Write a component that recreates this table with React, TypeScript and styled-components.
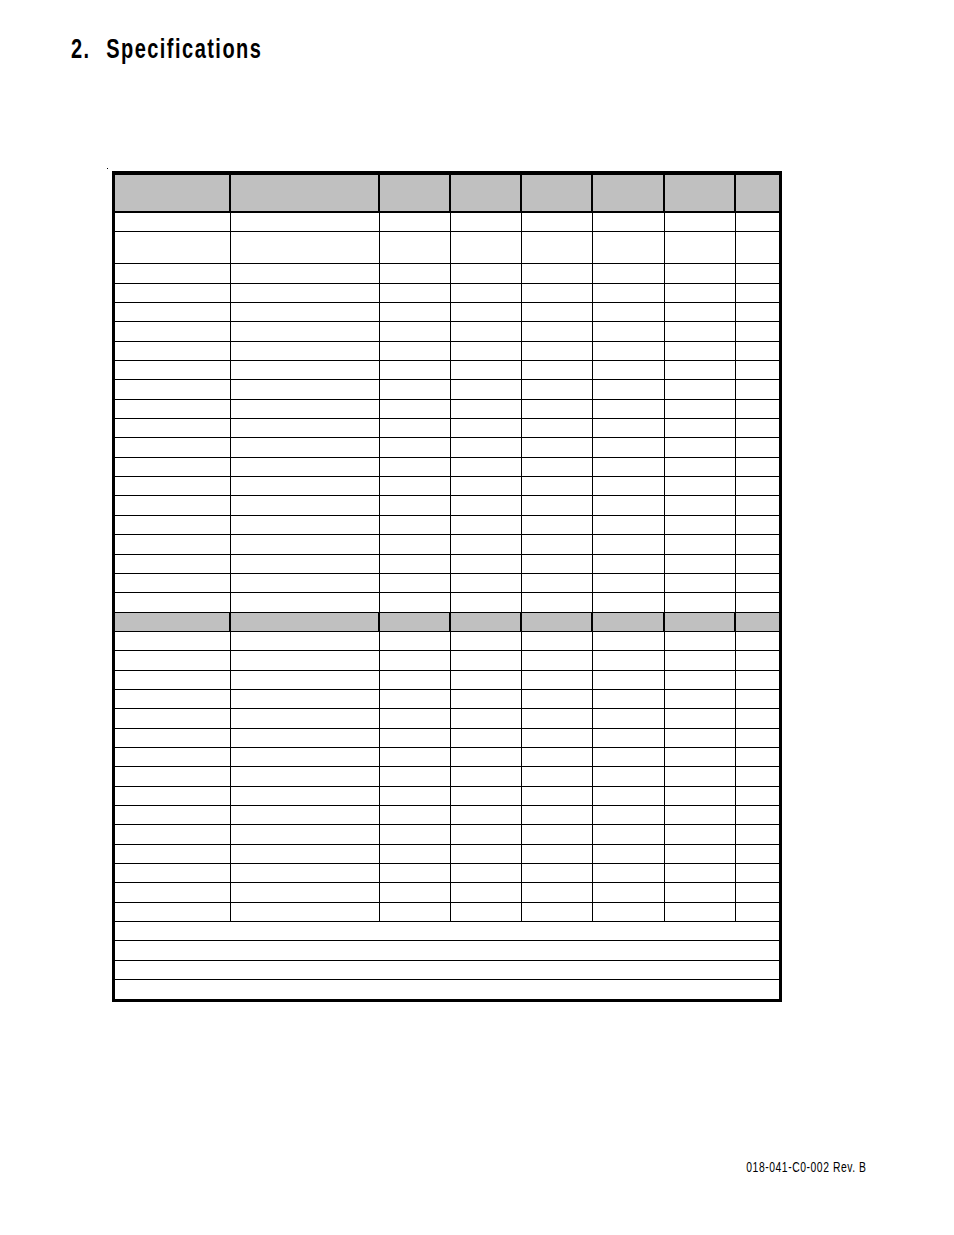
import React from "react";
import styled, { createGlobalStyle } from "styled-components";

const GlobalStyle = createGlobalStyle`
  *, *::before, *::after { box-sizing: border-box; }
  html, body { margin: 0; padding: 0; background: #ffffff; }
  body {
    width: 954px;
    min-height: 1235px;
    font-family: "Liberation Sans", Arial, sans-serif;
    color: #000;
  }
`;

const COLS = "116px 149px 71px 71px 71px 72px 71px 43px";
const NCOLS = 8;

const Page = styled.div`
  width: 954px;
  height: 1235px;
  display: flex;
  flex-direction: column;
`;

const Title = styled.h1`
  margin: 36px 0 0 71px;
  font-family: "Liberation Sans", Arial, sans-serif;
  font-size: 27px;
  line-height: 27px;
  font-weight: 700;
  white-space: nowrap;
`;

/* the printed heading uses a condensed face: narrow the regular one */
const Condensed = styled.span<{ $scale: number; $origin: string; $track: number }>`
  display: inline-block;
  letter-spacing: ${(p) => p.$track}px;
  transform: scaleX(${(p) => p.$scale});
  transform-origin: ${(p) => p.$origin} center;
`;

const TitleText = styled(Condensed)`
  word-spacing: 1px;
`;

const Speck = styled.div`
  width: 1px;
  height: 1px;
  margin: 105px 0 0 107px;
  background: #000;
`;

const SpecTable = styled.div`
  width: 670px;
  margin: 2px 0 0 112px;
  border: 3px solid #000;
  border-top-width: 4px;
  display: flex;
  flex-direction: column;
`;

const HeaderRow = styled.div`
  display: grid;
  grid-template-columns: ${COLS};
  height: 38px;
  border-bottom: 2px solid #000;
  background: #c0c0c0;
`;

const Row = styled.div<{ $tall?: boolean; $shaded?: boolean }>`
  display: grid;
  grid-template-columns: ${COLS};
  height: ${(p) => (p.$tall ? "32px" : "19.35px")};
  border-bottom: 1px solid #000;
  background: ${(p) => (p.$shaded ? "#c0c0c0" : "#ffffff")};
`;

const Cell = styled.div<{ $heavy?: boolean }>`
  border-right: ${(p) => (p.$heavy ? "2px" : "1px")} solid #000;
  &:last-child { border-right: none; }
`;

const NoteRow = styled.div<{ $last?: boolean }>`
  height: 19.35px;
  border-bottom: ${(p) => (p.$last ? "none" : "1px solid #000")};
`;

const Footer = styled.div`
  margin-top: auto;
  margin-bottom: 61px;
  padding-right: 87px;
  display: flex;
  justify-content: flex-end;
  font-family: "Liberation Sans", Arial, sans-serif;
  font-size: 14px;
  line-height: 14px;
  white-space: nowrap;
`;

type RowSpec = { tall?: boolean; shaded?: boolean };

const rows: RowSpec[] = [
  {},
  { tall: true },
  ...Array.from({ length: 18 }, () => ({})),
  { shaded: true },
  ...Array.from({ length: 15 }, () => ({})),
];

const cells = (heavy: boolean) =>
  Array.from({ length: NCOLS }, (_, i) => <Cell key={i} $heavy={heavy} />);

export default function App() {
  return (
    <>
      <GlobalStyle />
      <Page>
        <Title>
          <TitleText $scale={0.74} $origin="left" $track={2}>
            2.&nbsp; Specifications
          </TitleText>
        </Title>
        <Speck />
        <SpecTable>
          <HeaderRow>{cells(true)}</HeaderRow>
          {rows.map((r, i) => (
            <Row key={i} $tall={r.tall} $shaded={r.shaded}>
              {cells(!!r.shaded)}
            </Row>
          ))}
          {[0, 1, 2, 3].map((i) => (
            <NoteRow key={i} $last={i === 3} />
          ))}
        </SpecTable>
        <Footer>
          <Condensed $scale={0.74} $origin="right" $track={0.75}>
            018-041-C0-002 Rev. B
          </Condensed>
        </Footer>
      </Page>
    </>
  );
}
